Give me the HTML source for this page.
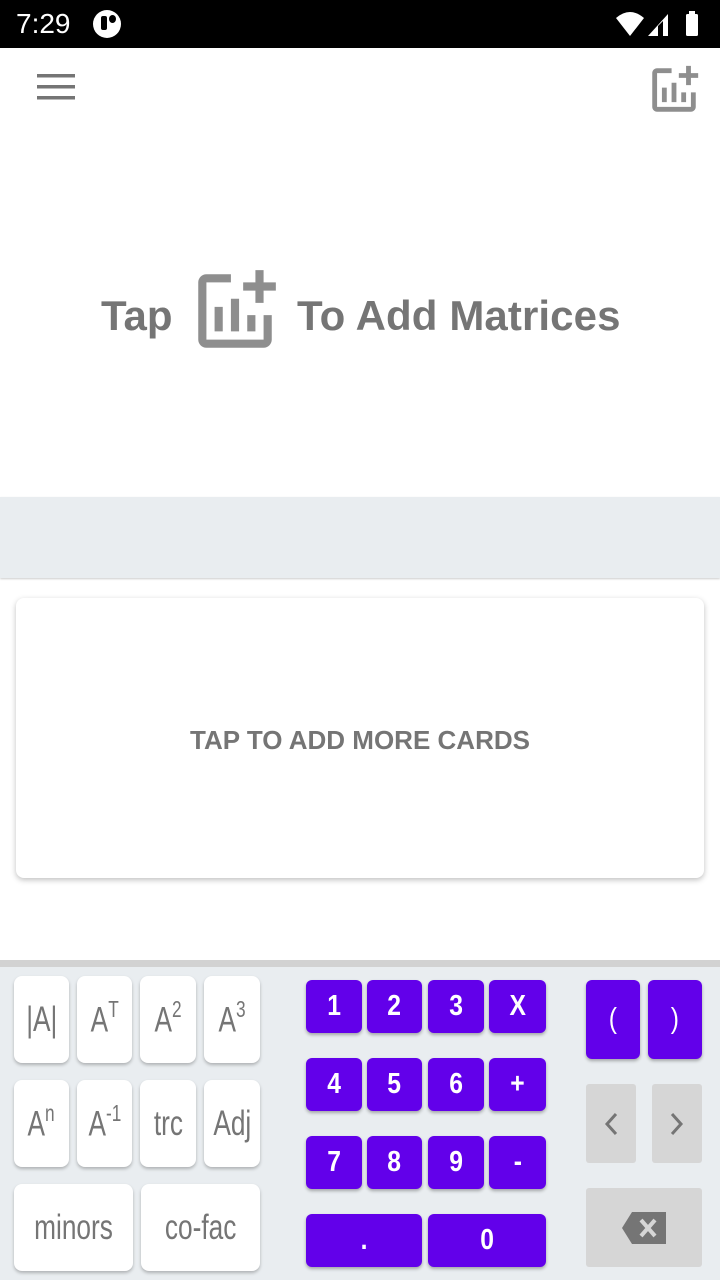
<!DOCTYPE html>
<html><head><meta charset="utf-8"><style>
*{margin:0;padding:0;box-sizing:border-box}
body{width:720px;height:1280px;overflow:hidden;background:#fff;font-family:"Liberation Sans",sans-serif;position:relative}
.a{position:absolute}
.sb{left:0;top:0;width:720px;height:48px;background:#000;color:#fff}
.k{position:absolute;background:#fff;border-radius:8px;box-shadow:0 2px 3px rgba(0,0,0,.25);color:#757575;font-size:35px;display:flex;align-items:center;justify-content:center}
.k span{display:inline-block;transform:scaleX(.75);white-space:nowrap}
.k sup{font-size:23px;position:relative;top:-2px}
.p{position:absolute;background:#6200ea;border-radius:6px;box-shadow:0 2px 3px rgba(0,0,0,.3);color:#fff;font-size:29px;font-weight:bold;display:flex;align-items:center;justify-content:center}
.p span{display:inline-block;transform:scaleX(.85)}
.g{position:absolute;background:#d6d6d6;border-radius:3px;display:flex;align-items:center;justify-content:center}
</style></head><body>
<div class="a sb">
 <div class="a" style="left:16px;top:8px;font-size:28px">7:29</div>
 <div class="a" style="left:93px;top:10px;width:28px;height:28px;border-radius:50%;background:#fff"></div>
 <div class="a" style="left:101px;top:16px;width:6px;height:14px;background:#000;border-radius:2px"></div>
 <div class="a" style="left:109px;top:15px;width:7px;height:8px;background:#000;border-radius:50%"></div>
 <svg class="a" style="left:614px;top:10px" width="92" height="28" viewBox="0 0 92 28">
  <path d="M2 8 Q16 -4 30 8 L16 26Z" fill="#fff"/>
  <path d="M34 26 L54 4 L54 26Z" fill="#fff"/><path d="M44 26 L44 16 L49 11 L49 26Z" fill="#000"/>
  <rect x="72" y="4" width="12" height="22" rx="1.5" fill="#fff"/><rect x="75" y="1" width="6" height="4" fill="#fff"/>
 </svg>
</div>
<svg class="a" style="left:37px;top:74px" width="38" height="28"><rect y="0" width="38" height="3.5" fill="#757575"/><rect y="11" width="38" height="3.5" fill="#757575"/><rect y="22" width="38" height="3.5" fill="#757575"/></svg>
<svg class="a" style="left:645px;top:61px" width="58" height="58" viewBox="0 0 24 24" fill="#8e8e8e"><path d="M22 5v2h-3v3h-2V7h-3V5h3V2h2v3h3zm-3 14H5V5h6V3H5c-1.1 0-2 .9-2 2v14c0 1.1.9 2 2 2h14c1.1 0 2-.9 2-2v-6h-2v6zm-4-6v4h2v-4h-2zm-4 4h2V9h-2v8zm-2 0v-6H7v6h2z"/></svg>
<div class="a" style="left:101px;top:292px;font-size:42px;font-weight:bold;color:#757575">Tap</div>
<svg class="a" style="left:186px;top:262px" width="98" height="98" viewBox="0 0 24 24" fill="#8e8e8e"><path d="M22 5v2h-3v3h-2V7h-3V5h3V2h2v3h3zm-3 14H5V5h6V3H5c-1.1 0-2 .9-2 2v14c0 1.1.9 2 2 2h14c1.1 0 2-.9 2-2v-6h-2v6zm-4-6v4h2v-4h-2zm-4 4h2V9h-2v8zm-2 0v-6H7v6h2z"/></svg>
<div class="a" style="left:297px;top:292px;font-size:42px;font-weight:bold;color:#757575;letter-spacing:.1px">To Add Matrices</div>
<div class="a" style="left:0;top:497px;width:720px;height:81px;background:#e9edf0;box-shadow:0 1px 2px rgba(0,0,0,.2)"></div>
<div class="a" style="left:16px;top:598px;width:688px;height:280px;background:#fff;border-radius:8px;box-shadow:0 2px 6px rgba(0,0,0,.25);display:flex;align-items:center;justify-content:center;color:#757575;font-weight:bold;font-size:26px;padding-top:4px">TAP TO ADD MORE CARDS</div>
<div class="a" style="left:0;top:960px;width:720px;height:320px;background:#e9edf0;border-top:7px solid #d2d2d2"></div>
<div class="k" style="left:14px;top:976px;width:55px;height:87px"><span>|A|</span></div>
<div class="k" style="left:77px;top:976px;width:55px;height:87px"><span>A<sup>T</sup></span></div>
<div class="k" style="left:140px;top:976px;width:56px;height:87px"><span>A<sup>2</sup></span></div>
<div class="k" style="left:204px;top:976px;width:56px;height:87px"><span>A<sup>3</sup></span></div>
<div class="k" style="left:14px;top:1080px;width:55px;height:87px"><span>A<sup>n</sup></span></div>
<div class="k" style="left:77px;top:1080px;width:55px;height:87px"><span>A<sup>-1</sup></span></div>
<div class="k" style="left:140px;top:1080px;width:56px;height:87px"><span>trc</span></div>
<div class="k" style="left:204px;top:1080px;width:56px;height:87px"><span>Adj</span></div>
<div class="k" style="left:14px;top:1184px;width:119px;height:87px"><span>minors</span></div>
<div class="k" style="left:141px;top:1184px;width:119px;height:87px"><span>co-fac</span></div>
<div class="p" style="left:306px;top:980px;width:56px;height:53px"><span>1</span></div>
<div class="p" style="left:367px;top:980px;width:55px;height:53px"><span>2</span></div>
<div class="p" style="left:428px;top:980px;width:56px;height:53px"><span>3</span></div>
<div class="p" style="left:489px;top:980px;width:57px;height:53px"><span>X</span></div>
<div class="p" style="left:306px;top:1058px;width:56px;height:53px"><span>4</span></div>
<div class="p" style="left:367px;top:1058px;width:55px;height:53px"><span>5</span></div>
<div class="p" style="left:428px;top:1058px;width:56px;height:53px"><span>6</span></div>
<div class="p" style="left:489px;top:1058px;width:57px;height:53px"><span>+</span></div>
<div class="p" style="left:306px;top:1136px;width:56px;height:53px"><span>7</span></div>
<div class="p" style="left:367px;top:1136px;width:55px;height:53px"><span>8</span></div>
<div class="p" style="left:428px;top:1136px;width:56px;height:53px"><span>9</span></div>
<div class="p" style="left:489px;top:1136px;width:57px;height:53px"><span>-</span></div>
<div class="p" style="left:306px;top:1214px;width:116px;height:53px"><span>.</span></div>
<div class="p" style="left:428px;top:1214px;width:118px;height:53px"><span>0</span></div>
<div class="p" style="left:586px;top:980px;width:54px;height:79px;font-weight:normal"><span>(</span></div>
<div class="p" style="left:648px;top:980px;width:54px;height:79px;font-weight:normal"><span>)</span></div>
<div class="g" style="left:586px;top:1084px;width:50px;height:79px"><svg width="16" height="26"><path d="M13 3 L4 13 L13 23" stroke="#757575" stroke-width="3" fill="none"/></svg></div>
<div class="g" style="left:652px;top:1084px;width:50px;height:79px"><svg width="16" height="26"><path d="M3 3 L12 13 L3 23" stroke="#757575" stroke-width="3" fill="none"/></svg></div>
<div class="g" style="left:586px;top:1188px;width:116px;height:79px"><svg width="48" height="36"><path d="M12 2 H46 V34 H12 L2 18Z" fill="#757575"/><path d="M21 10 L35 26 M35 10 L21 26" stroke="#d6d6d6" stroke-width="4"/></svg></div>
</body></html>
